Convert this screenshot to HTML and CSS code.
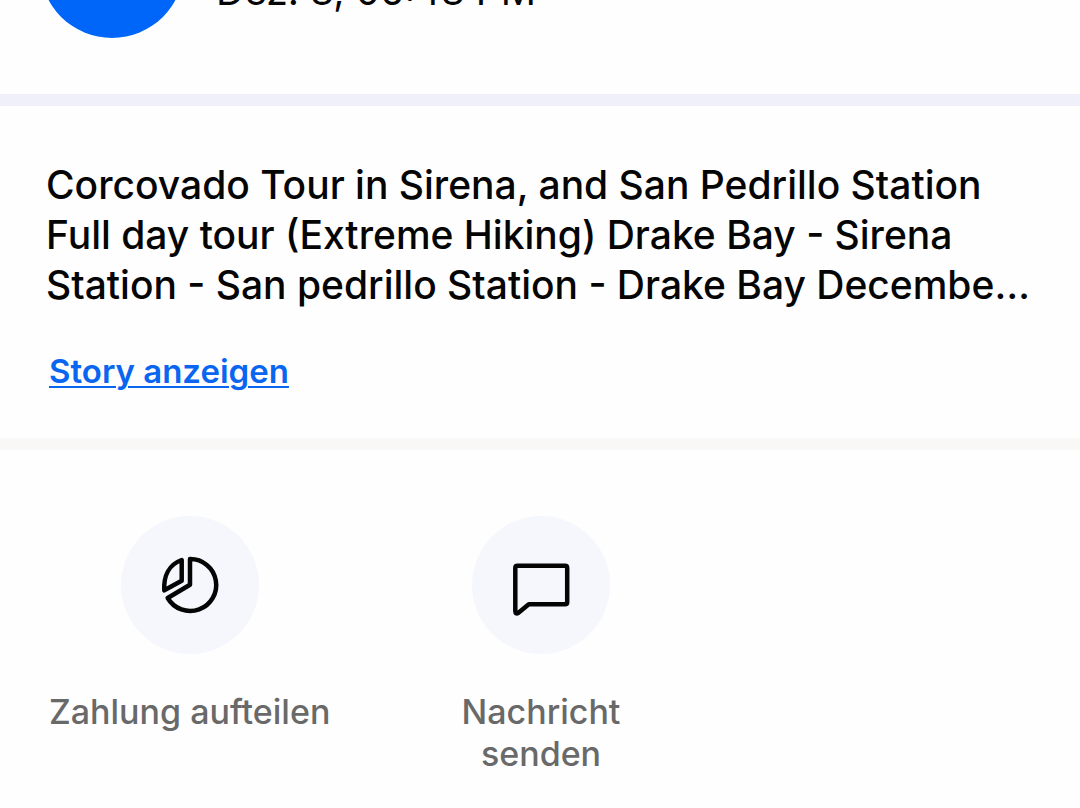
FILE: index.html
```html
<!DOCTYPE html>
<html lang="de">
<head>
<meta charset="utf-8">
<meta name="viewport" content="width=device-width, initial-scale=1">
<title>Zahlung</title>
<link rel="stylesheet" href="styles.css">
</head>
<body>
<main class="page">
  <header class="summary">
    <div class="avatar"></div>
    <time class="date">Dez. 8, 06:48 PM</time>
  </header>
  <section class="story">
    <p class="story-text">Corcovado Tour in Sirena, and San Pedrillo Station Full day tour (Extreme Hiking) Drake Bay - Sirena Station - San pedrillo Station - Drake Bay Decembe…</p>
    <a class="story-link" href="#">Story anzeigen</a>
  </section>
  <section class="actions">
    <button class="action" type="button">
      <span class="action-icon">
        <svg viewBox="0 0 64 64" aria-hidden="true"><path d="M32 6A26 26 0 1 1 9.700 45L32 31.700Z"/><path d="M23.700 7V27.800L6.300 37.300C5.500 23 11 11.500 23.700 7Z"/></svg>
      </span>
      <span class="action-label">Zahlung aufteilen</span>
    </button>
    <button class="action" type="button">
      <span class="action-icon">
        <svg viewBox="0 0 64 64" aria-hidden="true"><path d="M8.500 12.700H56Q58.200 12.700 58.200 14.900V49.200Q58.200 51.300 56 51.300H19.800L9.500 59.800Q6.300 61.600 6.300 58V14.900Q6.300 12.700 8.500 12.700Z"/></svg>
      </span>
      <span class="action-label">Nachricht senden</span>
    </button>
  </section>
</main>
</body>
</html>
```
FILE: styles.css
```css
* {
  box-sizing: border-box;
}

body {
  margin: 0;
  background: #fefefe;
  color: #050505;
  font-family: Inter, "Liberation Sans", sans-serif;
}

.page {
  overflow: hidden;
}

.summary {
  display: flex;
  align-items: flex-end;
  gap: 32px;
  margin-top: -106px;
  padding: 0 40px 56px;
  border-bottom: 12px solid #eff0fa;
}

.avatar {
  flex: none;
  width: 144px;
  height: 144px;
  border-radius: 50%;
  background: #0066f9;
}

.date {
  padding-bottom: 22px;
  font-size: 39px;
  line-height: 50px;
}

.story {
  padding: 54px 40px 46px 46px;
  border-bottom: 12px solid #f9f8f6;
}

.story-text {
  margin: 0 0 40px;
  font-size: 39px;
  font-weight: 500;
  line-height: 50px;
}

.story-link {
  display: block;
  width: fit-content;
  margin-left: 3px;
  color: #0a66f0;
  font-size: 33px;
  font-weight: 600;
  line-height: 42px;
  text-decoration-thickness: 2px;
  text-underline-offset: 3px;
}

.actions {
  display: grid;
  grid-template-columns: repeat(3, 1fr);
  align-items: start;
  padding: 66px 12px 30px 14px;
}

.action {
  display: flex;
  flex-direction: column;
  align-items: center;
  gap: 37px;
  padding: 0;
  border: 0;
  background: none;
  color: #696969;
  font: inherit;
  cursor: pointer;
}

.action-icon {
  display: grid;
  place-items: center;
  width: 138px;
  height: 138px;
  border-radius: 50%;
  background: #f5f7fc;
}

.action-icon svg {
  width: 64px;
  height: 64px;
  fill: none;
  stroke: #050505;
  stroke-width: 4.5;
  stroke-linecap: round;
  stroke-linejoin: round;
}

.action-label {
  max-width: 284px;
  font-size: 34px;
  font-weight: 500;
  line-height: 42px;
}
```
